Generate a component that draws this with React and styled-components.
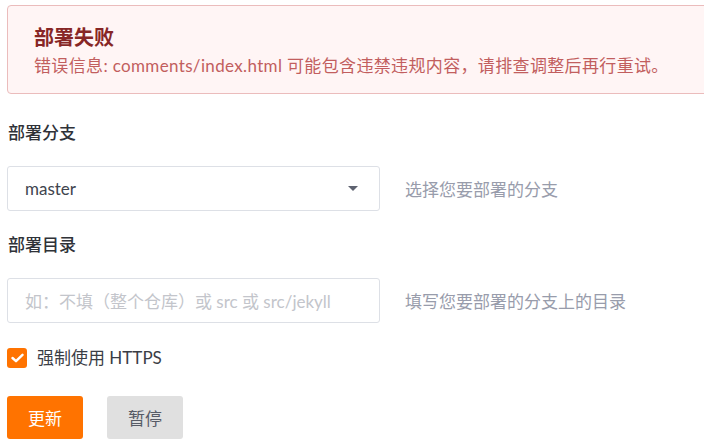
import styled, { createGlobalStyle } from 'styled-components';

const GlobalStyle = createGlobalStyle`
  html, body {
    margin: 0;
    padding: 0;
    background: #fff;
    overflow: hidden;
  }
  body {
    font-family: "Lato", "Noto Sans CJK SC", sans-serif;
    color: #333;
  }
`;

const Page = styled.div`
  padding: 5px 0 0 7px;
  width: 704px;
  box-sizing: border-box;
`;

const Alert = styled.div`
  width: 720px;
  box-sizing: border-box;
  height: 89px;
  background: #fff5f5;
  border: 1px solid #ebbcbc;
  border-radius: 4px;
  padding: 16px 26px;
`;

const AlertTitle = styled.div`
  font-size: 20px;
  font-weight: 700;
  color: #872626;
  line-height: 30px;
`;

const AlertText = styled.div`
  font-size: 17px;
  color: #c25e5e;
  line-height: 24px;
  margin-top: 2px;
  letter-spacing: 0.35px;
`;

const Label = styled.div`
  font-size: 17px;
  font-weight: 500;
  color: #2f3238;
  margin: ${p => p.$top}px 0 0 1px;
  line-height: 22px;
`;

const Row = styled.div`
  display: flex;
  align-items: center;
  margin-top: ${p => p.$top}px;
`;

const Field = styled.div`
  width: 373px;
  height: 45px;
  box-sizing: border-box;
  border: 1px solid #dde0e6;
  border-radius: 3px;
  display: flex;
  align-items: center;
  padding: 0 17px;
  font-size: 17px;
  color: ${p => (p.$placeholder ? '#c3c5cb' : '#40444e')};
  justify-content: space-between;
`;

const Caret = styled.span`
  width: 0;
  height: 0;
  border-left: 5px solid transparent;
  border-right: 5px solid transparent;
  border-top: 5px solid #5e6270;
  margin-right: 4px;
`;

const Hint = styled.div`
  margin-left: 25px;
  font-size: 17px;
  color: #989cab;
`;

const CheckRow = styled.label`
  display: flex;
  align-items: center;
  gap: 10px;
  height: 20px;
  line-height: 20px;
  margin-top: 25px;
  font-size: 17px;
  color: #3a3d45;
`;

const Box = styled.span`
  width: 20px;
  height: 20px;
  border-radius: 3px;
  background: #ff7300;
  display: flex;
  align-items: center;
  justify-content: center;
`;

const Buttons = styled.div`
  display: flex;
  gap: 24px;
  margin-top: 28px;
`;

const Button = styled.button`
  width: 76px;
  height: 43px;
  border: none;
  border-radius: 3px;
  font-family: inherit;
  font-size: 17px;
  background: ${p => (p.$primary ? '#ff7300' : '#e0e0e0')};
  color: ${p => (p.$primary ? '#fff' : '#575b66')};
`;

export default function App() {
  return (
    <>
      <GlobalStyle />
      <Page>
        <Alert>
          <AlertTitle>部署失败</AlertTitle>
          <AlertText>错误信息: comments/index.html 可能包含违禁违规内容，请排查调整后再行重试。</AlertText>
        </Alert>
        <Label $top={28}>部署分支</Label>
        <Row $top={22}>
          <Field>
            master
            <Caret />
          </Field>
          <Hint>选择您要部署的分支</Hint>
        </Row>
        <Label $top={23}>部署目录</Label>
        <Row $top={22}>
          <Field $placeholder>如：不填（整个仓库）或 src 或 src/jekyll</Field>
          <Hint>填写您要部署的分支上的目录</Hint>
        </Row>
        <CheckRow>
          <Box>
            <svg width="13" height="10" viewBox="0 0 13 10">
              <path d="M1.5 5 L5 8.2 L11.5 1.8" fill="none" stroke="#fff" strokeWidth="2.4" strokeLinecap="round" strokeLinejoin="round" />
            </svg>
          </Box>
          强制使用 HTTPS
        </CheckRow>
        <Buttons>
          <Button $primary>更新</Button>
          <Button>暂停</Button>
        </Buttons>
      </Page>
    </>
  );
}
